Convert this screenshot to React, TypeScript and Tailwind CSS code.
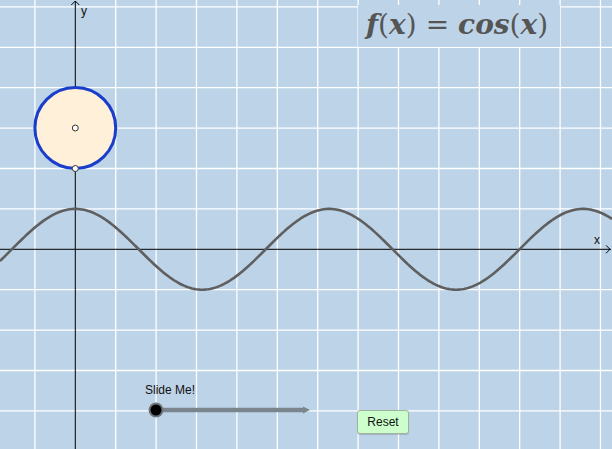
import React from "react";

const U = 40.4;
const OX = 75.3;
const OY = 249.3;
const W = 612;
const H = 449;

function curvePath() {
  const pts: string[] = [];
  for (let x = 0; x <= W; x += 2) {
    const y = OY - U * Math.cos((x - OX) / U);
    pts.push(`${x === 0 ? "M" : "L"}${x.toFixed(1)},${y.toFixed(2)}`);
  }
  return pts.join(" ");
}

function Graph() {
  const vlines = [];
  for (let k = -1; k <= 13; k++) if (k !== 0) vlines.push(OX + k * U);
  const hlines = [];
  for (let k = -6; k <= 4; k++) if (k !== 0) hlines.push(OY + k * U);

  return (
    <svg width={W} height={H} className="absolute left-0 top-0">
      {vlines.map((x) => (
        <line key={`v${x}`} x1={x} y1={0} x2={x} y2={H} stroke="#ffffff" strokeWidth={1.3} />
      ))}
      {hlines.map((y) => (
        <line key={`h${y}`} x1={0} y1={y} x2={W} y2={y} stroke="#ffffff" strokeWidth={1.3} />
      ))}

      {/* formula box hides the grid */}
      <rect x={358} y={5} width={202} height={42} fill="#bdd3e7" />

      {/* axes */}
      <line x1={OX} y1={1} x2={OX} y2={H} stroke="#000" strokeWidth={1} />
      <path d={`M${OX - 4},5 L${OX},1 L${OX + 4},5`} fill="none" stroke="#000" strokeWidth={1} />
      <line x1={0} y1={OY} x2={W - 1} y2={OY} stroke="#000" strokeWidth={1} />
      <path d={`M${W - 6},${OY - 4} L${W - 2},${OY} L${W - 6},${OY + 4}`} fill="none" stroke="#000" strokeWidth={1} />

      {/* cosine curve */}
      <path d={curvePath()} fill="none" stroke="#5f5f5f" strokeWidth={2.6} strokeLinejoin="round" />

      {/* unit circle */}
      <circle cx={OX} cy={128} r={U} fill="#fff0da" stroke="#1a3ecb" strokeWidth={3} />
      <circle cx={OX} cy={128} r={3} fill="#ffffff" stroke="#333" strokeWidth={1} />
      <circle cx={OX} cy={168.5} r={3} fill="#ffffff" stroke="#333" strokeWidth={1} />

      {/* slider */}
      <line x1={156} y1={410} x2={305} y2={410} stroke="#7b858d" strokeWidth={4.5} />
      <path d="M303,406.5 L310,410 L303,413.5 Z" fill="#7b858d" />
      <circle cx={156} cy={410} r={7.5} fill="#6e7479" />
      <circle cx={156} cy={410} r={5.5} fill="#000000" />
    </svg>
  );
}

export default function App() {
  return (
    <div className="relative h-[449px] w-[612px] overflow-hidden bg-[#bdd3e7] [font-family:'Liberation_Sans',Arial,sans-serif]">
      <Graph />

      <span className="absolute left-[81px] top-[5px] text-[12px] leading-none text-[#111]">y</span>
      <span className="absolute left-[594px] top-[234px] text-[12px] leading-none text-[#111]">x</span>

      <div className="absolute left-[366px] top-[8px] flex items-baseline whitespace-nowrap text-[28px] leading-[34px] text-[#555] [font-family:'DejaVu_Serif',serif]">
        <span className="font-bold italic">f</span>
        <span>(</span>
        <span className="font-bold italic">x</span>
        <span>)</span>
        <span className="px-[9px]">=</span>
        <span className="font-bold italic">cos</span>
        <span>(</span>
        <span className="font-bold italic">x</span>
        <span>)</span>
      </div>

      <span className="absolute left-[145px] top-[384px] text-[12px] leading-none text-[#111]">Slide Me!</span>

      <button
        type="button"
        className="absolute left-[357px] top-[410px] flex h-[24px] w-[52px] items-center justify-center rounded-[3px] border border-[#9fb39f] bg-[#ccffcc] text-[12px] text-[#111] shadow-[0_1px_1px_rgba(0,0,0,0.15)]"
      >
        Reset
      </button>
    </div>
  );
}
